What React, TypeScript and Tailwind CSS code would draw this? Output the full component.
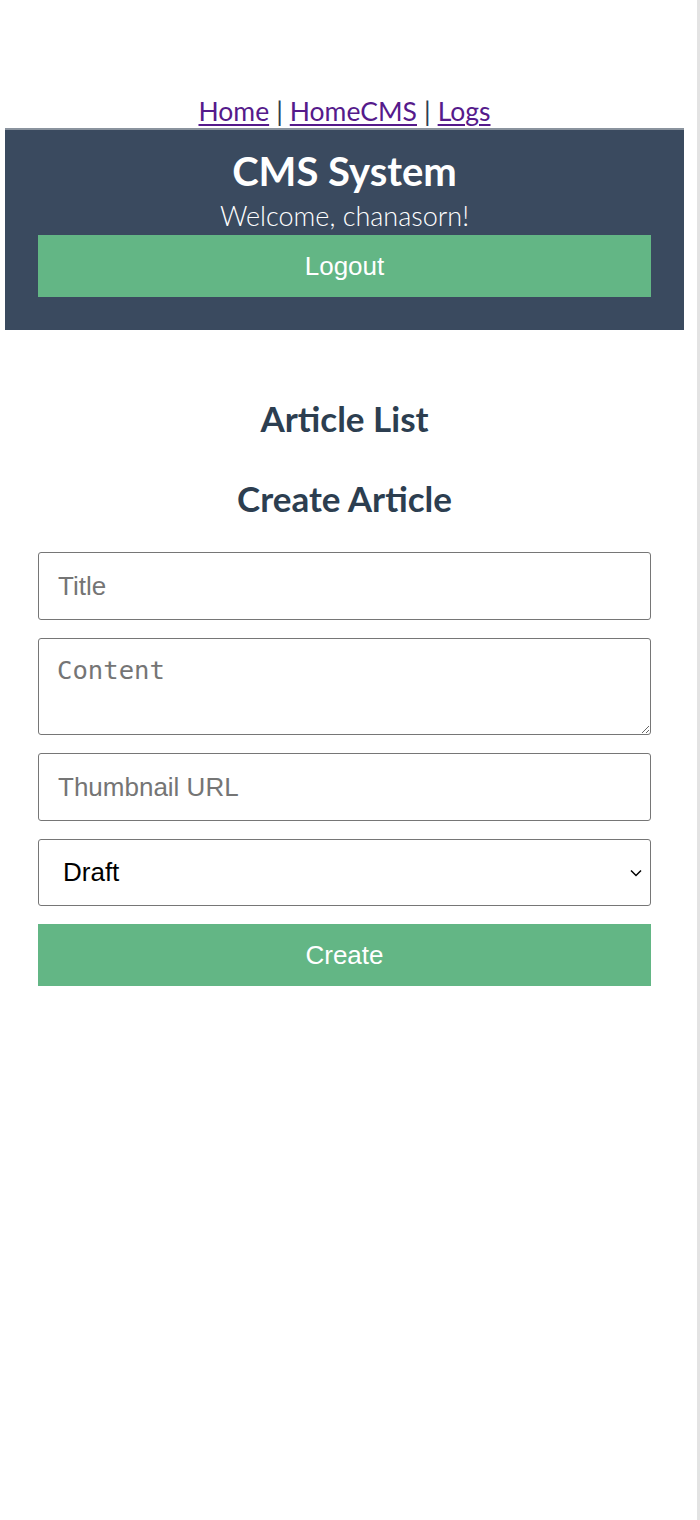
import React from 'react';

const avenir = "font-['Lato','Noto_Sans',sans-serif]";

export default function App() {
  return (
    <div className="min-h-[1520px] w-[700px] bg-white flex">
      <div className={`w-[689px] pt-[94px] text-center text-[#2c3e50] ${avenir}`}>
        {/* Nav */}
        <nav className="h-[34px] leading-[34px] text-[26.5px] text-[#2c3e50]">
          <a href="#" className="text-[#551a8b] underline underline-offset-[3px]">Home</a>
          <span className="mx-[7px]">|</span>
          <a href="#" className="text-[#551a8b] underline underline-offset-[3px]">HomeCMS</a>
          <span className="mx-[7px]">|</span>
          <a href="#" className="text-[#551a8b] underline underline-offset-[3px]">Logs</a>
        </nav>

        {/* Header */}
        <header className="mx-[5px] bg-[#3a4a5f] border-t-2 border-[#8a939e] px-[33px] pt-[17px] pb-[33px]">
          <h1 className="text-[40px] leading-[48px] font-bold text-white">CMS System</h1>
          <p className="mt-[5px] text-[27px] leading-[32px] font-light text-white">Welcome, chanasorn!</p>
          <button className="mt-[3px] w-full h-[62px] bg-[#63b685] text-white text-[26px] font-['Liberation_Sans',Arial,sans-serif]">
            Logout
          </button>
        </header>

        {/* Articles */}
        <main className="px-[38px]">
          <h2 className="mt-[67px] text-[35px] leading-[42px] font-bold text-[#2c3e50]">Article List</h2>
          <h2 className="mt-[38px] text-[35px] leading-[42px] font-bold text-[#2c3e50]">Create Article</h2>

          <form className="mt-[33px] flex flex-col gap-[18px] font-['Liberation_Sans',Arial,sans-serif]">
            <input
              placeholder="Title"
              className="h-[68px] w-full border border-[#767676] rounded-[3px] pl-[19px] text-[26px] text-black placeholder:text-[#757575] outline-none"
            />
            <textarea
              placeholder="Content"
              className="h-[97px] w-full border border-[#767676] rounded-[3px] pl-[18px] pt-[16px] text-[25.6px] leading-[30px] text-black placeholder:text-[#757575] outline-none font-['DejaVu_Sans_Mono',monospace]"
            />
            <input
              placeholder="Thumbnail URL"
              className="h-[68px] w-full border border-[#767676] rounded-[3px] pl-[19px] text-[26px] text-black placeholder:text-[#757575] outline-none"
            />
            <div className="relative">
              <select className="appearance-none h-[67px] w-full border border-[#767676] rounded-[3px] pl-[24px] text-[26px] text-black bg-white outline-none">
                <option>Draft</option>
                <option>Published</option>
              </select>
              <svg
                className="absolute right-[9px] top-1/2 -translate-y-1/2 pointer-events-none"
                width="12"
                height="8"
                viewBox="0 0 12 8"
                fill="none"
                stroke="black"
                strokeWidth="1.5"
              >
                <path d="M1 1.5l5 5 5-5" />
              </svg>
            </div>
            <button
              type="button"
              className="h-[62px] w-full bg-[#63b685] text-white text-[26px]"
            >
              Create
            </button>
          </form>
        </main>
      </div>
      <div className="flex-1 flex justify-end">
        <div className="w-[3px] bg-[#e3e3e3]" />
      </div>
    </div>
  );
}
